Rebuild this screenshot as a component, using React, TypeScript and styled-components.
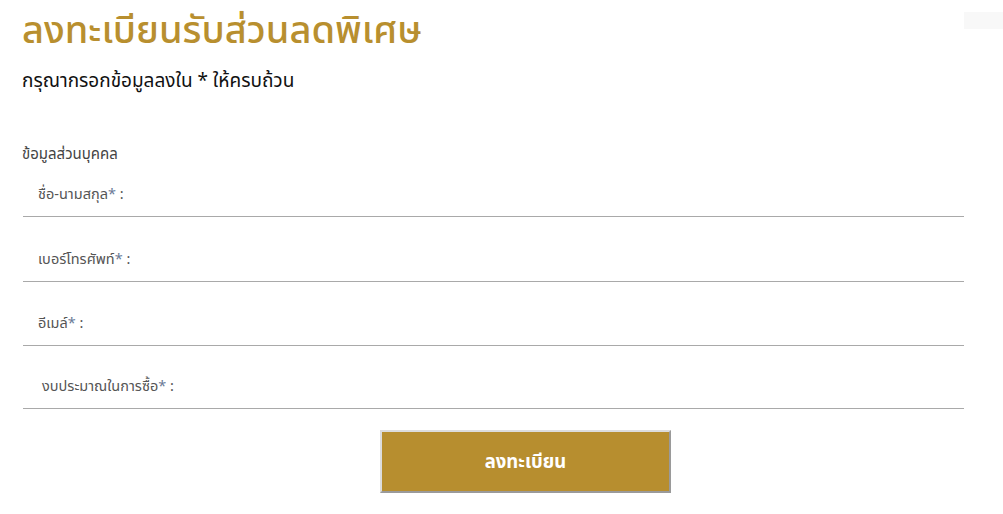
import React from "react";
import styled, { createGlobalStyle } from "styled-components";

const Global = createGlobalStyle`
  html, body { margin: 0; padding: 0; background: #ffffff; }
  body { font-family: "Noto Sans Thai", "Noto Sans", "Liberation Sans", sans-serif; }
`;

const Page = styled.div`
  display: flex;
  flex-direction: column;
  padding: 0 0 0 22px;
  width: 1003px;
  box-sizing: border-box;
`;

const Header = styled.div`
  display: flex;
  justify-content: space-between;
  align-items: flex-start;
`;

const Title = styled.h1`
  margin: 6px 0 0 0;
  font-size: 38px;
  line-height: 52px;
  font-weight: 500;
  color: #b88f2f;
`;

const Ghost = styled.div`
  width: 39px;
  height: 17px;
  margin-top: 12px;
  background: #f8f8f8;
`;

const Subtitle = styled.p`
  margin: 11px 0 0 0;
  font-size: 19px;
  line-height: 26px;
  color: #111;
`;

const Section = styled.div`
  margin-top: 49px;
  font-size: 15px;
  line-height: 22px;
  color: #444;
`;

const Fields = styled.div`
  display: flex;
  flex-direction: column;
  width: 941px;
  margin-left: 1px;
`;

const Field = styled.div<{ $h: number; $indent: number }>`
  height: ${(p) => p.$h}px;
  display: flex;
  align-items: flex-end;
  padding: 0 0 11px ${(p) => p.$indent}px;
  box-sizing: border-box;
  border-bottom: 1px solid #a9a9a9;
  font-size: 14.5px;
  line-height: 20px;
  color: #555;
`;

const Star = styled.span`
  color: #6a7a96;
`;

const Actions = styled.div`
  display: flex;
  justify-content: center;
  width: 941px;
  margin-top: 21px;
`;

const Button = styled.button`
  width: 291px;
  height: 63px;
  margin-left: 66px;
  background: #b78e2f;
  border-style: solid;
  border-width: 2px;
  border-color: #dcdcdc #9a9a9a #9a9a9a #dcdcdc;
  color: #fff;
  font-family: "Noto Sans Thai", "Noto Sans", "Liberation Sans", sans-serif;
  font-size: 18.5px;
  font-weight: 700;
  cursor: pointer;
`;

const fields = [
  { label: "ชื่อ-นามสกุล", h: 51, indent: 15 },
  { label: "เบอร์โทรศัพท์", h: 65, indent: 15 },
  { label: "อีเมล์", h: 64, indent: 15 },
  { label: "งบประมาณในการซื้อ", h: 63, indent: 19 },
];

export default function App() {
  return (
    <Page>
      <Global />
      <Header>
        <Title>ลงทะเบียนรับส่วนลดพิเศษ</Title>
        <Ghost />
      </Header>
      <Subtitle>กรุณากรอกข้อมูลลงใน * ให้ครบถ้วน</Subtitle>
      <Section>ข้อมูลส่วนบุคคล</Section>
      <Fields>
        {fields.map((f) => (
          <Field key={f.label} $h={f.h} $indent={f.indent}>
            {f.label}
            <Star>*</Star>&nbsp;:
          </Field>
        ))}
      </Fields>
      <Actions>
        <Button>ลงทะเบียน</Button>
      </Actions>
    </Page>
  );
}
